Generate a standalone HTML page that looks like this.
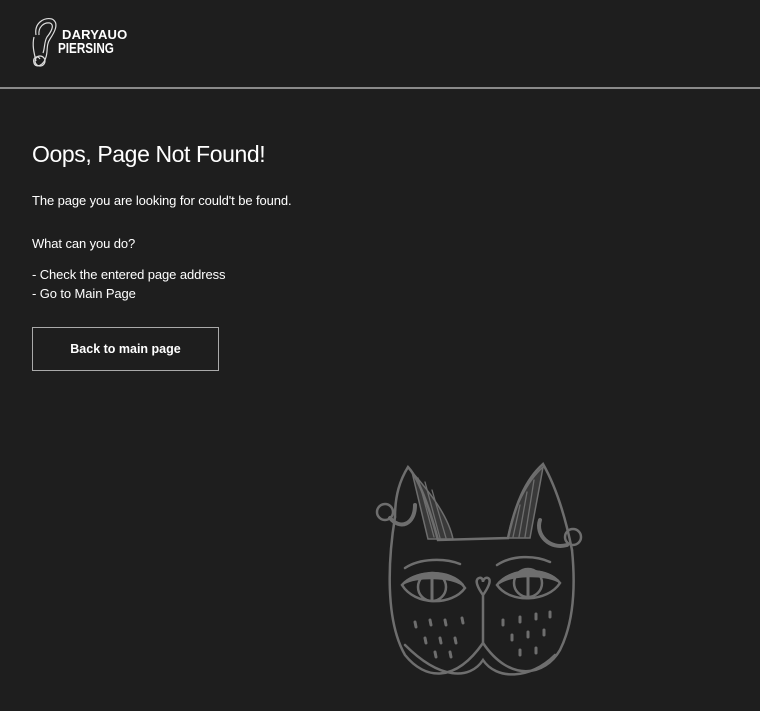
<!DOCTYPE html>
<html><head><meta charset="utf-8"><style>
html,body{margin:0;padding:0;background:#1e1e1e;width:760px;height:711px;overflow:hidden;font-family:"Liberation Sans",Arial,sans-serif;color:#fff}
.hdr{position:absolute;left:0;top:0;width:760px;height:87px;border-bottom:2px solid #8a8a8a}
.logo{position:absolute;font-weight:bold;line-height:14px}
h1{position:absolute;left:32px;top:141px;margin:0;font-size:23px;font-weight:normal;letter-spacing:-0.4px}
.t{position:absolute;left:32px;font-size:13px;line-height:19px;letter-spacing:-0.1px}
.btn{position:absolute;left:32px;top:327px;width:185px;height:42px;border:1px solid #aaa;text-align:center;line-height:42px;font-size:12.5px;font-weight:bold}
</style></head><body>
<div class="hdr">
<svg style="position:absolute;left:30px;top:15px" width="30" height="56" viewBox="0 0 30 56" fill="none" stroke="#ddd" stroke-width="1.2">
<path d="M6 20 C4 8 14 2 22 4 C30 8 24 18 20 24 C16 30 18 36 16 42 C14 50 6 54 4 48 C2 42 8 40 10 44"/>
<path d="M9 20 C8 12 14 7 20 8 C25 10 21 17 17 22 C14 27 15 33 13 38"/>
<path d="M4 22 C2 30 4 38 6 46"/>
<circle cx="10" cy="46" r="5"/>
</svg>
<div class="logo" style="left:62px;top:28px;font-size:13px;letter-spacing:0.2px">DARYAUO</div>
<div class="logo" style="left:58px;top:42px;font-size:15px;transform:scaleX(0.78);transform-origin:left">PIERSING</div>
</div>
<h1>Oops, Page Not Found!</h1>
<div class="t" style="top:191px">The page you are looking for could't be found.</div>
<div class="t" style="top:234px">What can you do?</div>
<div class="t" style="top:265px">- Check the entered page address<br>- Go to Main Page</div>
<div class="btn">Back to main page</div>
<svg style="position:absolute;left:0;top:0" width="760" height="711" fill="none" stroke="#6e6e6e" stroke-width="2.5" stroke-linecap="round">
<path d="M395 517 C388 560 385 620 405 655 C425 680 455 683 483 643 C510 683 545 676 560 650 C575 620 575 580 572 550"/>
<path d="M395 517 C395 495 400 480 408 467 C420 480 430 510 438 540 L508 538 C515 505 525 480 543 464 C555 485 565 515 572 550"/>
<path d="M412 472 C428 490 448 515 453 539 L428 539 Z" fill="#6e6e6e" fill-opacity="0.35" stroke-width="1.5"/>
<path d="M543 467 C528 480 512 510 508 538 L530 538 C535 510 540 485 543 467 Z" fill="#6e6e6e" fill-opacity="0.35" stroke-width="1.5"/>
<path d="M418 478 L434 537 M425 482 L440 538 M432 490 L446 538 M520 505 L513 537 M527 492 L519 537 M534 480 L525 537" stroke-width="1.3"/>
<path d="M405 645 C440 680 470 680 483 660 C496 680 530 680 555 655"/>
<path d="M405 568 C420 558 445 558 460 564 M497 565 C512 555 535 555 550 562"/>
<path d="M402 585 C415 570 452 568 465 588 C452 606 415 606 402 585 Z"/>
<path d="M497 585 C510 568 547 566 560 583 C548 602 510 604 497 585 Z"/>
<path d="M404 583 C418 570 450 569 463 585 C450 576 418 576 404 583 Z M499 583 C512 568 545 567 558 581 C545 574 512 574 499 583 Z" fill="#6e6e6e"/>
<circle cx="432" cy="587" r="14"/><circle cx="528" cy="583" r="14"/>
<path d="M432 575 L432 599 M528 571 L528 595" stroke-width="3"/>
<path d="M483 595 C478 588 474 580 479 578 C482 577 483 580 483 582 C483 580 485 577 488 578 C492 580 488 588 483 595 L483 643"/>
<g stroke-width="3">
<path d="M415 622 l1 5 M430 620 l1 5 M445 620 l1 5 M462 618 l1 5 M425 638 l1 5 M440 638 l1 5 M455 638 l1 5 M435 652 l1 5 M450 652 l1 5"/>
<path d="M503 620 l0 5 M520 617 l0 5 M536 614 l0 5 M550 612 l0 5 M512 635 l0 5 M528 632 l0 5 M544 630 l0 5 M520 650 l0 5 M536 648 l0 5"/>
</g>
<circle cx="385" cy="512" r="8"/><path d="M390 518 C400 530 415 525 415 505" stroke-width="4"/>
<circle cx="573" cy="537" r="8"/><path d="M540 520 C535 535 550 550 567 545" stroke-width="4"/>
</svg>
</body></html>
